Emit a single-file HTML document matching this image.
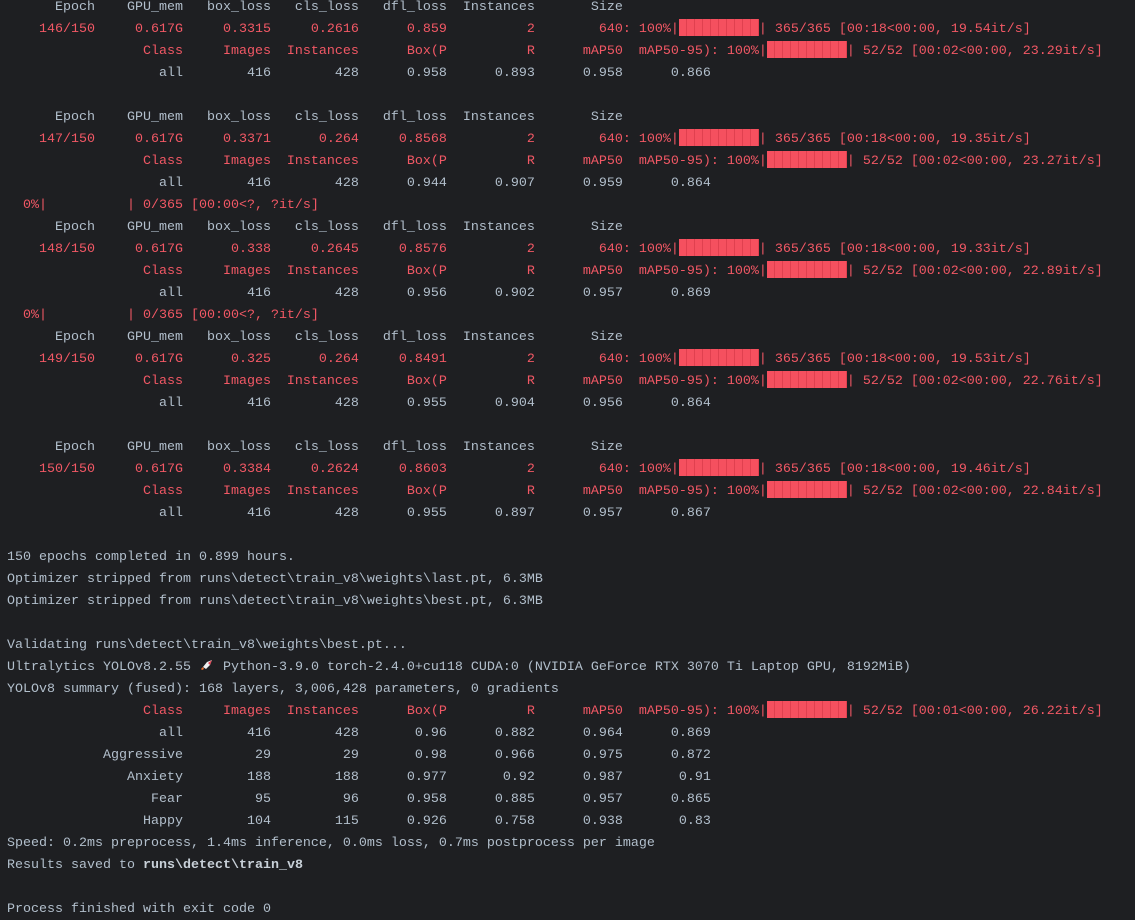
<!DOCTYPE html>
<html><head><meta charset="utf-8"><style>
html,body{margin:0;padding:0;background:#1e1f22;width:1135px;height:920px;overflow:hidden}
pre{margin:-3px 0 0 7px;font-family:"Liberation Mono","DejaVu Sans Mono",monospace;font-size:13.33px;line-height:22px;color:#b2bfcc;white-space:pre}
.r{color:#f25865}
.b{display:inline-block;width:80px;height:17px;vertical-align:-4px;background:repeating-linear-gradient(90deg,#f5505f 0 7px,#e0404f 7px 8px)}
.k{display:inline-block;width:16px;height:13px;vertical-align:-2px}
b{font-weight:bold;color:#c8d0d8}
</style></head><body><pre>      Epoch    GPU_mem   box_loss   cls_loss   dfl_loss  Instances       Size
<span class="r">    146/150     0.617G     0.3315     0.2616      0.859          2        640: 100%|<span class="b"></span>| 365/365 [00:18&lt;00:00, 19.54it/s]</span>
<span class="r">                 Class     Images  Instances      Box(P          R      mAP50  mAP50-95): 100%|<span class="b"></span>| 52/52 [00:02&lt;00:00, 23.29it/s]</span>
                   all        416        428      0.958      0.893      0.958      0.866

      Epoch    GPU_mem   box_loss   cls_loss   dfl_loss  Instances       Size
<span class="r">    147/150     0.617G     0.3371      0.264     0.8568          2        640: 100%|<span class="b"></span>| 365/365 [00:18&lt;00:00, 19.35it/s]</span>
<span class="r">                 Class     Images  Instances      Box(P          R      mAP50  mAP50-95): 100%|<span class="b"></span>| 52/52 [00:02&lt;00:00, 23.27it/s]</span>
                   all        416        428      0.944      0.907      0.959      0.864
<span class="r">  0%|          | 0/365 [00:00&lt;?, ?it/s]</span>
      Epoch    GPU_mem   box_loss   cls_loss   dfl_loss  Instances       Size
<span class="r">    148/150     0.617G      0.338     0.2645     0.8576          2        640: 100%|<span class="b"></span>| 365/365 [00:18&lt;00:00, 19.33it/s]</span>
<span class="r">                 Class     Images  Instances      Box(P          R      mAP50  mAP50-95): 100%|<span class="b"></span>| 52/52 [00:02&lt;00:00, 22.89it/s]</span>
                   all        416        428      0.956      0.902      0.957      0.869
<span class="r">  0%|          | 0/365 [00:00&lt;?, ?it/s]</span>
      Epoch    GPU_mem   box_loss   cls_loss   dfl_loss  Instances       Size
<span class="r">    149/150     0.617G      0.325      0.264     0.8491          2        640: 100%|<span class="b"></span>| 365/365 [00:18&lt;00:00, 19.53it/s]</span>
<span class="r">                 Class     Images  Instances      Box(P          R      mAP50  mAP50-95): 100%|<span class="b"></span>| 52/52 [00:02&lt;00:00, 22.76it/s]</span>
                   all        416        428      0.955      0.904      0.956      0.864

      Epoch    GPU_mem   box_loss   cls_loss   dfl_loss  Instances       Size
<span class="r">    150/150     0.617G     0.3384     0.2624     0.8603          2        640: 100%|<span class="b"></span>| 365/365 [00:18&lt;00:00, 19.46it/s]</span>
<span class="r">                 Class     Images  Instances      Box(P          R      mAP50  mAP50-95): 100%|<span class="b"></span>| 52/52 [00:02&lt;00:00, 22.84it/s]</span>
                   all        416        428      0.955      0.897      0.957      0.867

150 epochs completed in 0.899 hours.
Optimizer stripped from runs\detect\train_v8\weights\last.pt, 6.3MB
Optimizer stripped from runs\detect\train_v8\weights\best.pt, 6.3MB

Validating runs\detect\train_v8\weights\best.pt...
Ultralytics YOLOv8.2.55 <svg class="k" viewBox="0 0 16 13"><path d="M13 1 L8 3 L4 8 L7 10 L11 6 Z" fill="#f0f0f0"/><path d="M13 1 L11 6 L9 4 Z" fill="#e04050"/><path d="M4 8 L2 10 L3 11 L5 10 Z" fill="#f07030"/></svg> Python-3.9.0 torch-2.4.0+cu118 CUDA:0 (NVIDIA GeForce RTX 3070 Ti Laptop GPU, 8192MiB)
YOLOv8 summary (fused): 168 layers, 3,006,428 parameters, 0 gradients
<span class="r">                 Class     Images  Instances      Box(P          R      mAP50  mAP50-95): 100%|<span class="b"></span>| 52/52 [00:01&lt;00:00, 26.22it/s]</span>
                   all        416        428       0.96      0.882      0.964      0.869
            Aggressive         29         29       0.98      0.966      0.975      0.872
               Anxiety        188        188      0.977       0.92      0.987       0.91
                  Fear         95         96      0.958      0.885      0.957      0.865
                 Happy        104        115      0.926      0.758      0.938       0.83
Speed: 0.2ms preprocess, 1.4ms inference, 0.0ms loss, 0.7ms postprocess per image
Results saved to <b>runs\detect\train_v8</b>

Process finished with exit code 0
</pre></body></html>
